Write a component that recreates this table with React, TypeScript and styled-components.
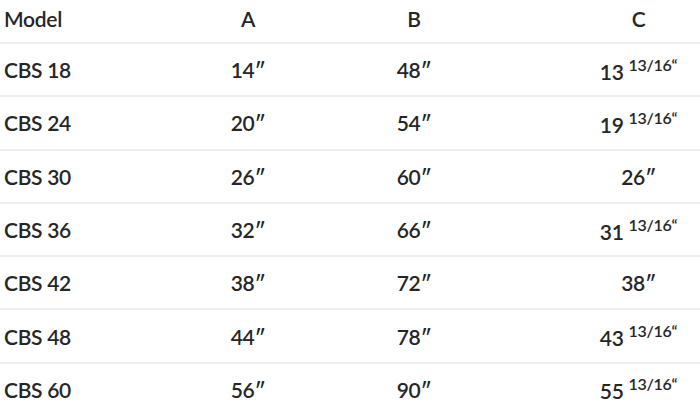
import styled, { createGlobalStyle } from "styled-components";

const GlobalStyle = createGlobalStyle`
  html, body {
    margin: 0;
    padding: 0;
    background: #fff;
  }
  body {
    font-family: Lato, "Open Sans", sans-serif;
    color: #262626;
  }
`;

type Row = {
  model: string;
  a: string;
  b: string;
  c: string;
  frac?: string;
};

const rows: Row[] = [
  { model: "CBS 18", a: "14″", b: "48″", c: "13", frac: "13/16“" },
  { model: "CBS 24", a: "20″", b: "54″", c: "19", frac: "13/16“" },
  { model: "CBS 30", a: "26″", b: "60″", c: "26″" },
  { model: "CBS 36", a: "32″", b: "66″", c: "31", frac: "13/16“" },
  { model: "CBS 42", a: "38″", b: "72″", c: "38″" },
  { model: "CBS 48", a: "44″", b: "78″", c: "43", frac: "13/16“" },
  { model: "CBS 60", a: "56″", b: "90″", c: "55", frac: "13/16“" },
];

const App = () => {
  return (
    <>
      <GlobalStyle />
      <Table>
        <Line $head>
          <ModelCell>Model</ModelCell>
          <Cell>A</Cell>
          <Cell>B</Cell>
          <LastCell>C</LastCell>
        </Line>
        {rows.map((r, i) => (
          <Line key={r.model} $last={i === rows.length - 1}>
            <ModelCell>{r.model}</ModelCell>
            <Cell>{r.a}</Cell>
            <Cell>{r.b}</Cell>
            <LastCell>
              {r.c}
              {r.frac && <Frac>{r.frac}</Frac>}
            </LastCell>
          </Line>
        ))}
      </Table>
    </>
  );
};

export default App;

const Table = styled.div`
  width: 700px;
  height: 420px;
  overflow: hidden;
  display: flex;
  flex-direction: column;
`;

const Line = styled.div<{ $head?: boolean; $last?: boolean }>`
  display: grid;
  grid-template-columns: 165px 166px 166px 1fr;
  align-items: center;
  height: ${(p) => (p.$head ? "36px" : "51.3px")};
  padding-bottom: ${(p) => (p.$head ? "6px" : "0")};
  border-bottom: 2px solid ${(p) => (p.$last ? "transparent" : "#eeeeee")};
  font-size: 21px;
  font-weight: 600;
  letter-spacing: -0.3px;
  flex-shrink: 0;
`;

const Cell = styled.div`
  text-align: center;
  white-space: nowrap;
`;

const ModelCell = styled.div`
  padding-left: 4px;
  white-space: nowrap;
`;

const LastCell = styled.div`
  padding-left: 80px;
  text-align: center;
  white-space: nowrap;
`;

const Frac = styled.sup`
  font-size: 16px;
  margin-left: 5px;
  position: relative;
  top: -1px;
`;
